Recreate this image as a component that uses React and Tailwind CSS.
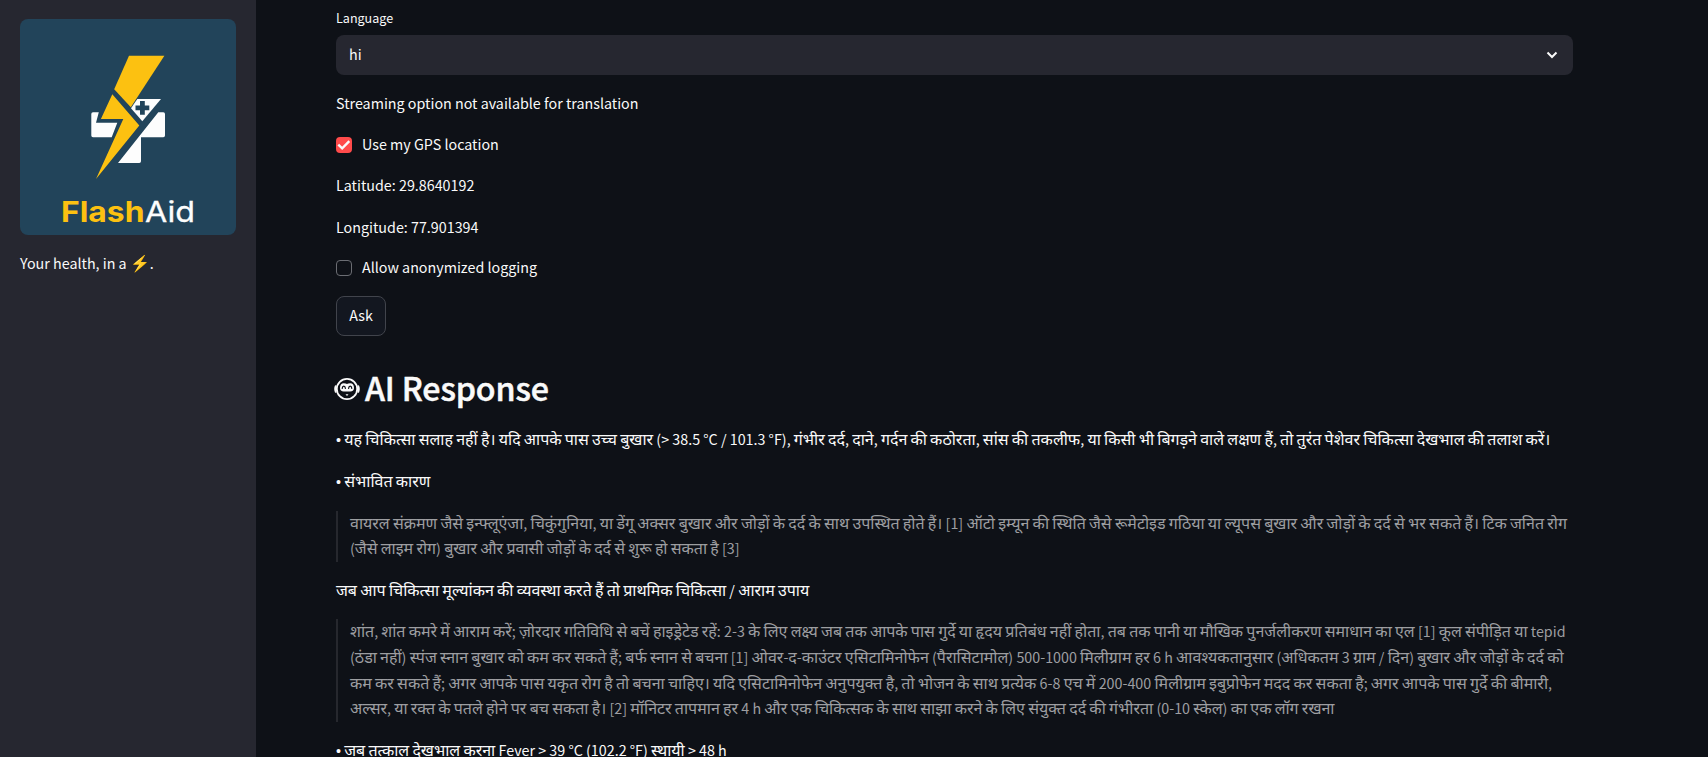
const WARNING =
  "• यह चिकित्सा सलाह नहीं है। यदि आपके पास उच्च बुखार (> 38.5 °C / 101.3 °F), गंभीर दर्द, दाने, गर्दन की कठोरता, सांस की तकलीफ, या किसी भी बिगड़ने वाले लक्षण हैं, तो तुरंत पेशेवर चिकित्सा देखभाल की तलाश करें।";

const CAUSES = [
  "वायरल संक्रमण जैसे इन्फ्लूएंजा, चिकुंगुनिया, या डेंगू अक्सर बुखार और जोड़ों के दर्द के साथ उपस्थित होते हैं। [1] ऑटो इम्यून की स्थिति जैसे रूमेटोइड गठिया या ल्यूपस बुखार और जोड़ों के दर्द से भर सकते हैं। टिक जनित रोग",
  "(जैसे लाइम रोग) बुखार और प्रवासी जोड़ों के दर्द से शुरू हो सकता है [3]",
];

const CARE = [
  "शांत, शांत कमरे में आराम करें; ज़ोरदार गतिविधि से बचें हाइड्रेटेड रहें: 2-3 के लिए लक्ष्य जब तक आपके पास गुर्दे या हृदय प्रतिबंध नहीं होता, तब तक पानी या मौखिक पुनर्जलीकरण समाधान का एल [1] कूल संपीड़ित या tepid",
  "(ठंडा नहीं) स्पंज स्नान बुखार को कम कर सकते हैं; बर्फ स्नान से बचना [1] ओवर-द-काउंटर एसिटामिनोफेन (पैरासिटामोल) 500-1000 मिलीग्राम हर 6 h आवश्यकतानुसार (अधिकतम 3 ग्राम / दिन) बुखार और जोड़ों के दर्द को",
  "कम कर सकते हैं; अगर आपके पास यकृत रोग है तो बचना चाहिए। यदि एसिटामिनोफेन अनुपयुक्त है, तो भोजन के साथ प्रत्येक 6-8 एच में 200-400 मिलीग्राम इबुप्रोफेन मदद कर सकता है; अगर आपके पास गुर्दे की बीमारी,",
  "अल्सर, या रक्त के पतले होने पर बच सकता है। [2] मॉनिटर तापमान हर 4 h और एक चिकित्सक के साथ साझा करने के लिए संयुक्त दर्द की गंभीरता (0-10 स्केल) का एक लॉग रखना",
];

// Devanagari runs are set slightly larger than the Latin text around them.
function Mixed({ text }) {
  return text
    .split(/([\u0900-\u097F]+|•|⚡)/)
    .filter(Boolean)
    .map((run, i) => {
      if (run === "•") return <span key={i} className="font-['Liberation_Sans',sans-serif] leading-none">{run}</span>;
      if (/^[\u0900-\u097F⚡]/.test(run)) return <span key={i} className="text-[16px] leading-none">{run}</span>;
      return run;
    });
}

function Line({ text, className = "" }) {
  return (
    <p className={`h-[25.6px] whitespace-nowrap ${className}`}>
      <Mixed text={text} />
    </p>
  );
}

function Logo() {
  return (
    <svg viewBox="20 19 216 216" className="block h-[216px] w-[216px] rounded-lg bg-[#22445a]">
      <g fill="#fdfdfd">
        <path d="M93 112.3H98.8L96 122.7H117.3L111.7 137.3H93Q91.3 137.3 91.3 135.6V114Q91.3 112.3 93 112.3Z" />
        <path d="M158.3 112.3H163.3Q165 112.3 165 114V135.6Q165 137.3 163.3 137.3H141V161.3Q141 163 139.3 163H118Z" />
        <path d="M137.3 99H161L142.3 121.3L131 108.3Z" />
      </g>
      <path d="M142.4 101V114.8M135.5 107.9H149.3" stroke="#22445a" strokeWidth="4.8" />
      <g fill="#fcc111">
        <path d="M129 55.7H164.4L130.8 107.3L114.2 89.3Z" />
        <path d="M112.3 94.3L139.3 125.5L96 178.9L123.3 118.9H100.9Z" />
      </g>
      <text x="61" y="221.5" fontSize="28.5" fontWeight="700" fill="#fcc111" textLength="83.5" lengthAdjust="spacingAndGlyphs" fontFamily="Inter, sans-serif">Flash</text>
      <text x="145" y="221.5" fontSize="28.5" fontWeight="400" fill="#fdfdfd" stroke="#fdfdfd" strokeWidth="0.3" textLength="50" lengthAdjust="spacingAndGlyphs" fontFamily="Inter, sans-serif">Aid</text>
    </svg>
  );
}

function Face() {
  return (
    <svg viewBox="0 0 26 24" className="h-6 w-[26px]" fill="none" stroke="#fafafa" strokeLinecap="round">
      <ellipse cx="13" cy="12" rx="10.2" ry="10.2" strokeWidth="1.8" />
      <path d="M1.7 9.2Q0.5 12 1.7 14.8M24.3 9.2Q25.5 12 24.3 14.8" strokeWidth="1.8" />
      <path d="M6 11Q6 6.3 9.8 6.3Q12 6.3 13 7.1Q14 6.3 16.2 6.3Q20 6.3 20 11Q20 14.4 16.2 14.4H9.8Q6 14.4 6 11Z" fill="#fafafa" stroke="none" />
      <path d="M8.2 11.4Q8.4 9.2 9.8 9.2Q11.2 9.2 11.4 11.4M14.6 11.4Q14.8 9.2 16.2 9.2Q17.6 9.2 17.8 11.4" stroke="#0e1117" strokeWidth="1.2" />
      <path d="M11.5 17.2H14.5L13 18.9Z" fill="#fafafa" stroke="none" />
    </svg>
  );
}

function Quote({ lines }) {
  return (
    <blockquote className="mb-4 border-l-2 border-[#26282e] pl-3 text-[#9d9ea1]">
      {lines.map((line) => (
        <Line key={line} text={line} />
      ))}
    </blockquote>
  );
}

export default function App() {
  return (
    <div className="flex h-[757px] overflow-hidden bg-[#0e1117] font-['Noto_Sans_CJK_SC','Noto_Sans_Devanagari',sans-serif] text-[14.3px] leading-[24.6px] text-[#fafafa]">
      <aside className="w-64 shrink-0 bg-[#262730] px-5 pt-[19px]">
        <Logo />
        <Line className="mt-4" text="Your health, in a ⚡." />
      </aside>
      <main className="w-[1317px] shrink-0 pl-20 pt-[7px]">
        <div className="h-7 text-[12.55px] leading-[22.6px]">Language</div>
        <div className="flex h-10 items-center justify-between rounded-lg bg-[#262730] pr-[15px] pl-[13px]">
          <Line text="hi" />
          <svg viewBox="0 0 12 8" className="h-2 w-3" fill="none" stroke="#fafafa" strokeWidth="2">
            <path d="M1.5 1.5L6 6L10.5 1.5" />
          </svg>
        </div>
        <Line className="mt-4" text="Streaming option not available for translation" />
        <div className="mt-4 flex h-6 items-center gap-[10px]">
          <span className="flex h-4 w-4 items-center justify-center rounded bg-[#ff4b4b]">
            <svg viewBox="0 0 16 16" className="h-4 w-4" fill="none" stroke="#fafafa" strokeWidth="2.4">
              <path d="M2.3 7.6L6.2 11.3L13.3 4.2" />
            </svg>
          </span>
          <Line text="Use my GPS location" />
        </div>
        <Line className="mt-4" text="Latitude: 29.8640192" />
        <Line className="mt-4 leading-[25.6px]" text="Longitude: 77.901394" />
        <div className="mt-4 flex h-6 items-center gap-[10px]">
          <span className="h-4 w-4 rounded border border-[#6b6d73]" />
          <Line text="Allow anonymized logging" />
        </div>
        <button className="mt-4 flex h-10 w-[50px] items-center justify-center rounded-lg border border-[#41444c] bg-[#131720]">
          <Line text="Ask" />
        </button>
        <h2 className="mt-4 flex h-[75.6px] items-center gap-[5px] text-[32.2px] leading-[39.6px] font-medium tracking-[-0.15px] [-webkit-text-stroke:0.5px_#fafafa]">
          <span className="-ml-[2px] pb-[1px]"><Face /></span>
          <span className="h-[43.2px]">AI Response</span>
        </h2>
        <Line className="mb-4" text={WARNING} />
        <Line className="mb-4" text="• संभावित कारण" />
        <Quote lines={CAUSES} />
        <Line className="mb-4" text="जब आप चिकित्सा मूल्यांकन की व्यवस्था करते हैं तो प्राथमिक चिकित्सा / आराम उपाय" />
        <Quote lines={CARE} />
        <Line text="• जब तत्काल देखभाल करना Fever > 39 °C (102.2 °F) स्थायी > 48 h" />
      </main>
    </div>
  );
}
